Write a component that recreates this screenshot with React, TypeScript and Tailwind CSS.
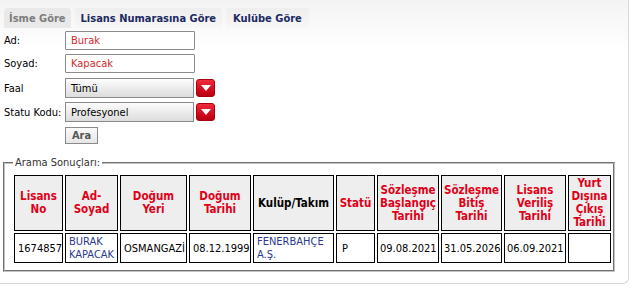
import React from "react";

const F = { fontFamily: '"DejaVu Sans Condensed", "DejaVu Sans", sans-serif' };

function Arrow() {
  return (
    <div className="ml-[2px] h-[18px] w-[19px] rounded-[3px] bg-gradient-to-b from-[#ef2b3c] via-[#d80f22] to-[#b8000f] border border-[#a8000e] flex items-center justify-center">
      <svg width="10" height="6" viewBox="0 0 10 6">
        <path d="M0 0 L10 0 L5 6 Z" fill="#ffffff" />
      </svg>
    </div>
  );
}

const heads: { t: string[]; black?: boolean }[] = [
  { t: ["Lisans", "No"] },
  { t: ["Ad-", "Soyad"] },
  { t: ["Doğum", "Yeri"] },
  { t: ["Doğum", "Tarihi"] },
  { t: ["Kulüp/Takım"], black: true },
  { t: ["Statü"] },
  { t: ["Sözleşme", "Başlangıç", "Tarihi"] },
  { t: ["Sözleşme", "Bitiş", "Tarihi"] },
  { t: ["Lisans", "Veriliş", "Tarihi"] },
  { t: ["Yurt", "Dışına", "Çıkış", "Tarihi"] },
];

const widths = [49, 53, 67, 62, 81, 39, 62, 61, 62, 43];

export default function App() {
  return (
    <div className="w-[630px] h-[299px] bg-white text-[11px] leading-[13px] text-black" style={F}>
      <div className="w-[629px] h-[284px] border-r border-b border-[#d8d8d8] rounded-br-[6px] bg-gradient-to-b from-[#f3f3f3] to-white to-[50px] bg-no-repeat">
        {/* tabs */}
        <div className="flex pt-[8px] pl-[4px] gap-[4px] h-[28px]">
          <div className="h-[20px] px-[5px] rounded-t-[4px] bg-[#e9e9e9] text-[#7d7d7d] font-bold flex items-center">İsme Göre</div>
          <div className="h-[20px] px-[6px] rounded-t-[4px] bg-gradient-to-b from-[#eeeeee] to-[#f7f7f7] text-[#1c2a63] font-bold flex items-center">Lisans Numarasına Göre</div>
          <div className="h-[20px] px-[7px] rounded-t-[4px] bg-gradient-to-b from-[#eeeeee] to-[#f7f7f7] text-[#1c2a63] font-bold flex items-center">Kulübe Göre</div>
        </div>
        {/* form */}
        <div className="pl-[4px] pt-[3px]">
          <div className="flex items-center h-[19px]">
            <div className="w-[61px]">Ad:</div>
            <div className="w-[130px] h-[19px] border border-[#8a8a8a] bg-white rounded-[1px] px-[5px] flex items-center text-[#d42a2a]">Burak</div>
          </div>
          <div className="flex items-center h-[19px] mt-[4px]">
            <div className="w-[61px]">Soyad:</div>
            <div className="w-[130px] h-[19px] border border-[#8a8a8a] bg-white rounded-[1px] px-[5px] flex items-center text-[#d42a2a]">Kapacak</div>
          </div>
          <div className="flex items-center h-[20px] mt-[5px]">
            <div className="w-[61px]">Faal</div>
            <div className="w-[129px] h-[20px] border border-[#8a8a8a] bg-gradient-to-b from-[#fdfdfd] to-[#dcdcdc] px-[5px] flex items-center">Tümü</div>
            <Arrow />
          </div>
          <div className="flex items-center h-[20px] mt-[4px]">
            <div className="w-[61px]">Statu Kodu:</div>
            <div className="w-[129px] h-[20px] border border-[#8a8a8a] bg-gradient-to-b from-[#fdfdfd] to-[#dcdcdc] px-[5px] flex items-center">Profesyonel</div>
            <Arrow />
          </div>
          <div className="flex mt-[5px]">
            <div className="w-[61px]" />
            <div className="w-[33px] h-[17px] border border-[#8a8a8a] bg-gradient-to-b from-[#fafafa] to-[#e6e6e6] text-[#555] font-bold flex items-center justify-center">Ara</div>
          </div>
        </div>
        {/* results */}
        <fieldset className="ml-[3px] mt-[12px] w-[611px] border-2 [border-style:groove] border-[#c4c4c4] pl-[7px] pt-[4px] pb-[5px]">
          <legend className="ml-[1px] px-[2px] text-[#333]">Arama Sonuçları:</legend>
          <table className="table-fixed border-separate border-spacing-[2px] w-[592px]">
            <colgroup>
              {widths.map((w, i) => (
                <col key={i} style={{ width: w }} />
              ))}
            </colgroup>
            <thead>
              <tr>
                {heads.map((h, i) => (
                  <th
                    key={i}
                    className={`h-[56px] border border-black bg-[#eeeeee] font-bold text-center align-middle p-0 leading-[13px] text-[11.5px] ${h.black ? "text-black" : "text-[#e00018]"}`}
                  >
                    {h.t.map((l, j) => (
                      <div key={j}>{l}</div>
                    ))}
                  </th>
                ))}
              </tr>
            </thead>
            <tbody>
              <tr>
                <td className="h-[30px] border border-black px-[3px] align-middle text-right">1674857</td>
                <td className="h-[30px] border border-black px-[3px] align-middle text-[#2b3990] leading-[13px]">BURAK<br />KAPACAK</td>
                <td className="h-[30px] border border-black px-[3px] align-middle">OSMANGAZİ</td>
                <td className="h-[30px] border border-black px-[3px] align-middle text-center">08.12.1999</td>
                <td className="h-[30px] border border-black px-[3px] align-middle text-[#2b3990] leading-[13px]">FENERBAHÇE<br />A.Ş.</td>
                <td className="h-[30px] border border-black px-[5px] align-middle">P</td>
                <td className="h-[30px] border border-black px-[2px] align-middle text-center">09.08.2021</td>
                <td className="h-[30px] border border-black px-[2px] align-middle text-center">31.05.2026</td>
                <td className="h-[30px] border border-black px-[2px] align-middle text-center">06.09.2021</td>
                <td className="h-[30px] border border-black px-[2px] align-middle"></td>
              </tr>
            </tbody>
          </table>
        </fieldset>
      </div>
    </div>
  );
}
